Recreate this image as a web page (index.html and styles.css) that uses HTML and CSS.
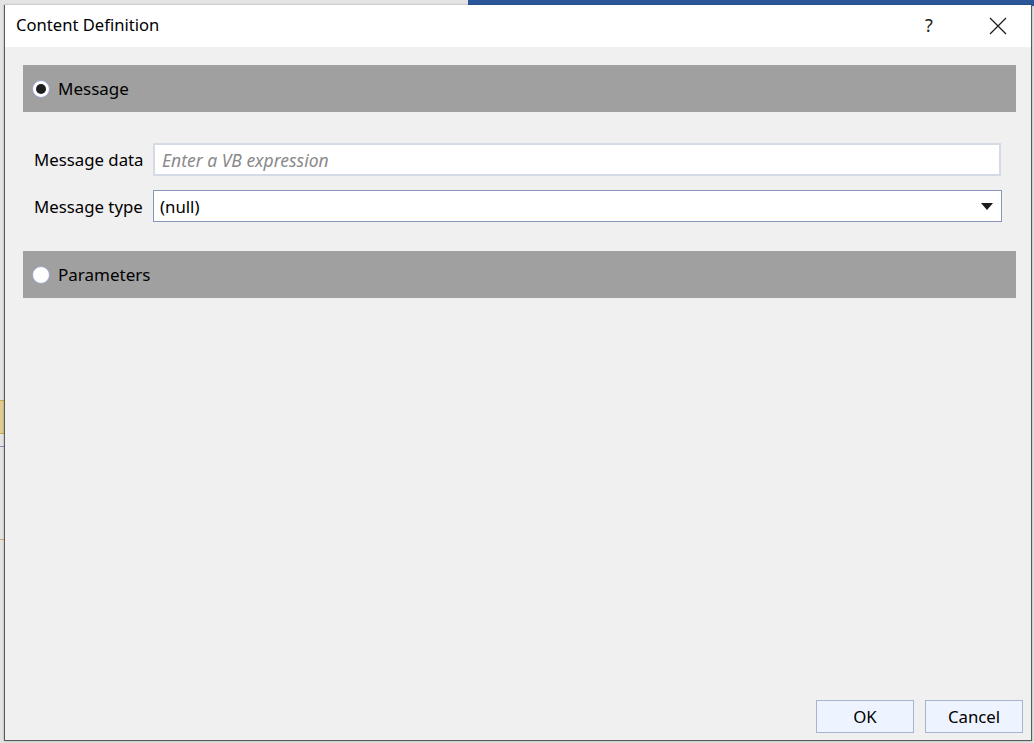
FILE: index.html
```html
<!DOCTYPE html>
<html>
<head>
<meta charset="utf-8">
<link rel="stylesheet" href="styles.css">
</head>
<body>
<div class="backdrop">
  <div class="ribbon"></div>
  <div class="side-mark m1"></div>
  <div class="side-mark m2"></div>
  <div class="side-mark m3"></div>
</div>
<div class="dialog">
  <div class="titlebar">
    <span class="title">Content Definition</span>
    <div class="title-actions">
      <span class="help">?</span>
      <svg class="close" width="18" height="18" viewBox="0 0 18 18"><path d="M1 1 L17 17 M17 1 L1 17" stroke="#1a1a1a" stroke-width="1.2" fill="none"/></svg>
    </div>
  </div>
  <div class="body">
    <div class="content">
      <div class="section-bar">
        <span class="radio checked"></span>
        <span class="section-label">Message</span>
      </div>
      <div class="form">
        <div class="row">
          <label class="label">Message data</label>
          <div class="input text-input"><span class="placeholder">Enter a VB expression</span></div>
        </div>
        <div class="row">
          <label class="label">Message type</label>
          <div class="input combo"><span class="value">(null)</span><svg class="arrow" width="12" height="7" viewBox="0 0 12 7"><path d="M0 0 H12 L6 7 Z" fill="#1a1a1a"/></svg></div>
        </div>
      </div>
      <div class="section-bar">
        <span class="radio"></span>
        <span class="section-label">Parameters</span>
      </div>
    </div>
    <div class="footer">
      <button class="btn">OK</button>
      <button class="btn">Cancel</button>
    </div>
  </div>
</div>
</body>
</html>
```
FILE: styles.css
```css
html, body {
  margin: 0;
  padding: 0;
  width: 1034px;
  height: 743px;
  overflow: hidden;
  background: #e4e4e4;
  font-family: "Noto Sans", "Open Sans", sans-serif;
}
.backdrop {
  position: absolute;
  left: 0;
  top: 0;
  width: 1034px;
  height: 743px;
}
.ribbon {
  position: absolute;
  left: 468px;
  top: 0;
  width: 566px;
  height: 6px;
  background: #2b579a;
}
.side-mark {
  position: absolute;
  left: 0;
  width: 4px;
}
.m1 { top: 400px; height: 32px; background: #e1cc90; border-top: 1px solid #c9a850; border-bottom: 1px solid #c9a850; }
.m2 { top: 446px; height: 1px; background: #8090b0; }
.m3 { top: 539px; height: 1px; background: #d0b060; }
.dialog {
  position: absolute;
  left: 4px;
  top: 5px;
  width: 1026px;
  height: 735px;
  border: 1px solid #5a5a5a;
  border-top: none;
  display: flex;
  flex-direction: column;
  background: #f0f0f0;
  box-shadow: 0 0 2px rgba(0,0,0,0.3);
}
.titlebar {
  height: 42px;
  background: #ffffff;
  display: flex;
  align-items: center;
  justify-content: space-between;
  padding-left: 11px;
}
.title {
  font-size: 16.6px;
  color: #000;
  margin-top: -3px;
}
.title-actions {
  display: flex;
  align-items: center;
}
.help {
  font-size: 18px;
  color: #222;
  width: 20px;
  text-align: center;
  margin-right: 50px;
  margin-top: -3px;
}
.close {
  margin-right: 24px;
}
.body {
  flex: 1;
  display: flex;
  flex-direction: column;
  padding: 18px 0 7px 18px;
}
.content {
  flex: 1;
  margin-right: 15px;
}
.section-bar {
  height: 47px;
  background: #a0a0a0;
  display: flex;
  align-items: center;
  padding-left: 9px;
}
.radio {
  width: 18px;
  height: 18px;
  border-radius: 50%;
  background: #fff;
  border: 1px solid #9aa4c8;
  box-sizing: border-box;
  margin-right: 8px;
  position: relative;
}
.radio.checked::after {
  content: "";
  position: absolute;
  left: 3px;
  top: 3px;
  width: 10px;
  height: 10px;
  border-radius: 50%;
  background: #1e1e1e;
}
.section-label {
  font-size: 17px;
  color: #000;
}
.form {
  padding: 31px 0 29px 11px;
  display: flex;
  flex-direction: column;
  gap: 14px;
}
.row {
  display: flex;
  align-items: center;
}
.label {
  width: 119px;
  font-size: 16.8px;
  color: #000;
}
.input {
  background: #fff;
  box-sizing: border-box;
  display: flex;
  align-items: center;
  font-size: 16.8px;
}
.text-input {
  width: 848px;
  height: 33px;
  border: 2px solid #d4dae6;
  padding-left: 7px;
}
.placeholder {
  font-style: italic;
  color: #8a8a8a;
  font-size: 17.5px;
}
.combo {
  width: 849px;
  height: 32px;
  border: 1px solid #8896bc;
  padding-left: 6px;
  padding-right: 8px;
  justify-content: space-between;
}
.value { color: #000; }
.footer {
  display: flex;
  justify-content: flex-end;
  gap: 11px;
  padding-right: 8px;
}
.btn {
  width: 98px;
  height: 33px;
  background: #eef4ff;
  border: 1px solid #a6b4d2;
  font-family: "Noto Sans", "Open Sans", sans-serif;
  font-size: 16.8px;
  color: #000;
  padding: 0;
}
```
